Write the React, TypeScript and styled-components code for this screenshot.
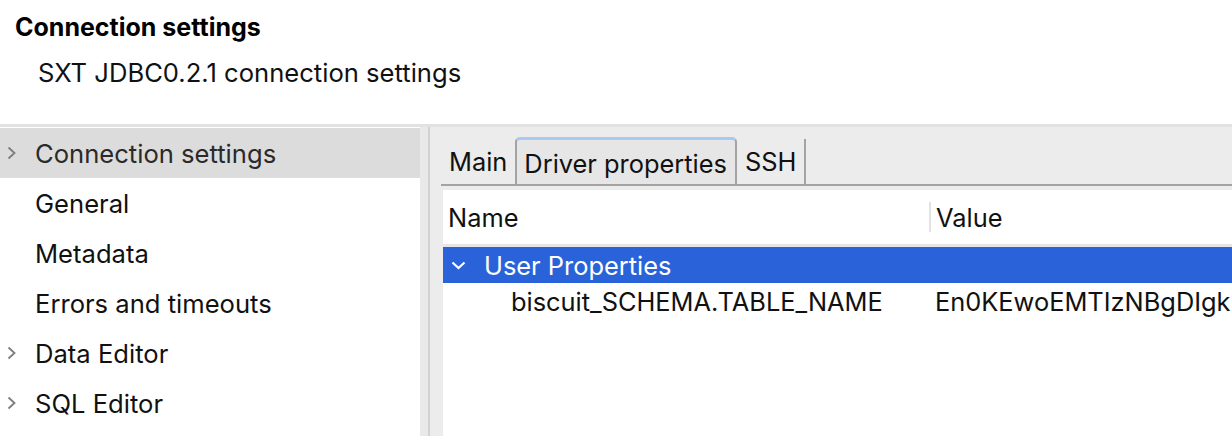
import * as React from 'react';
import styled, { createGlobalStyle } from 'styled-components';

const GlobalStyle = createGlobalStyle`
  html, body {
    margin: 0;
    padding: 0;
    background: #ffffff;
  }
  body {
    width: 1232px;
    height: 436px;
    overflow: hidden;
    font-family: Inter, "Liberation Sans", Arial, sans-serif;
    color: #1a1a1a;
  }
`;

const Page = styled.div`
  display: flex;
  flex-direction: column;
  width: 1232px;
  height: 436px;
`;

const Header = styled.header`
  height: 127px;
  box-sizing: border-box;
  padding: 12px 0 0 15px;
  background: #ffffff;
  border-bottom: 3px solid #e2e2e2;
`;

const Title = styled.h1`
  margin: 0;
  font-size: 25px;
  font-weight: 700;
  line-height: 30px;
  color: #000;
`;

const Subtitle = styled.div`
  margin: 16px 0 0 23px;
  font-size: 25.6px;
  line-height: 30px;
  color: #111;
`;

const Body = styled.div`
  flex: 1;
  display: flex;
  min-height: 0;
`;

const Sidebar = styled.nav`
  width: 420px;
  padding-top: 1px;
  background: #ffffff;
`;

const NavRow = styled.div<{ $selected?: boolean }>`
  display: flex;
  align-items: center;
  height: 50px;
  padding-left: 7px;
  background: ${({ $selected }) => ($selected ? '#dcdcdc' : 'transparent')};
  font-size: 25.6px;
  color: ${({ $selected }) => ($selected ? '#2a2a2a' : '#111')};
`;

const ChevronSlot = styled.span`
  width: 28px;
  display: flex;
  align-items: center;
`;

const Splitter = styled.div`
  width: 8px;
  background: #e9e9e9;
  border-right: 2px solid #d2d2d2;
`;

const Panel = styled.section`
  flex: 1;
  display: flex;
  flex-direction: column;
  padding: 10px 0 0 11px;
  background: #ececec;
  min-width: 0;
`;

const TabBar = styled.div`
  display: flex;
  align-items: flex-end;
  height: 47px;
  border-bottom: 2px solid #a3a3a3;
`;

const Tab = styled.div<{ $active?: boolean; $edge?: boolean }>`
  box-sizing: border-box;
  height: ${({ $active }) => ($active ? '47px' : '45px')};
  display: flex;
  align-items: center;
  padding: ${({ $active }) => ($active ? '3px 8px 0 7px' : '0 8px')};
  font-size: 25.4px;
  color: #111;
  background: ${({ $active }) => ($active ? '#e6e6e6' : 'transparent')};
  border-left: ${({ $active }) => ($active ? '2px solid #a3a3a3' : 'none')};
  border-right: ${({ $active, $edge }) =>
    $active || $edge ? '2px solid #a3a3a3' : 'none'};
  border-top: ${({ $active }) => ($active ? '3px solid #a9c8f2' : 'none')};
  border-radius: ${({ $active }) => ($active ? '5px 5px 0 0' : '0')};
`;

const TableArea = styled.div`
  flex: 1;
  margin: 4px 0 0 2px;
  background: #ffffff;
  overflow: hidden;
`;

const HeadRow = styled.div`
  display: grid;
  grid-template-columns: 486px 1fr;
  height: 54px;
  border-bottom: 3px solid #e6e6e6;
  align-items: center;
  font-size: 25.4px;
  color: #111;
`;

const HeadCell = styled.div<{ $divider?: boolean }>`
  display: flex;
  align-items: center;
  height: 30px;
  padding-left: 5px;
  border-left: ${({ $divider }) => ($divider ? '2px solid #e2e2e2' : 'none')};
  white-space: nowrap;
`;

const GroupRow = styled.div`
  display: flex;
  align-items: center;
  height: 36px;
  padding-left: 8px;
  background: #2a63d9;
  color: #ffffff;
  font-size: 25.4px;
`;

const GroupChevron = styled.span`
  width: 33px;
  display: flex;
  align-items: center;
`;

const DataRow = styled.div`
  display: grid;
  grid-template-columns: 486px 1fr;
  height: 36px;
  align-items: center;
  font-size: 25.4px;
  color: #111;
  white-space: nowrap;
`;

const NameCell = styled.div<{ $depth: number }>`
  padding-left: ${({ $depth }) => 67 * $depth + 1}px;
  overflow: hidden;
`;

const ValueCell = styled.div`
  padding-left: 6px;
  overflow: hidden;
`;

const RightChevron = () => (
  <svg width="10" height="14" viewBox="0 0 10 14">
    <polyline points="1.5,1.5 7.5,7 1.5,12.5" fill="none" stroke="#7d7d7d" strokeWidth="1.8" />
  </svg>
);

const DownChevron = () => (
  <svg width="15" height="9" viewBox="0 0 15 9">
    <polyline points="1.5,1.5 7.5,7 13.5,1.5" fill="none" stroke="#ffffff" strokeWidth="2.2" />
  </svg>
);

const navItems = [
  { label: 'Connection settings', expandable: true, selected: true },
  { label: 'General' },
  { label: 'Metadata' },
  { label: 'Errors and timeouts' },
  { label: 'Data Editor', expandable: true },
  { label: 'SQL Editor', expandable: true },
];

export default function App() {
  return (
    <>
      <GlobalStyle />
      <Page>
        <Header>
          <Title>Connection settings</Title>
          <Subtitle>SXT JDBC0.2.1 connection settings</Subtitle>
        </Header>
        <Body>
          <Sidebar>
            {navItems.map((item) => (
              <NavRow key={item.label} $selected={item.selected}>
                <ChevronSlot>{item.expandable && <RightChevron />}</ChevronSlot>
                {item.label}
              </NavRow>
            ))}
          </Sidebar>
          <Splitter />
          <Panel>
            <TabBar>
              <Tab>Main</Tab>
              <Tab $active>Driver properties</Tab>
              <Tab $edge>SSH</Tab>
            </TabBar>
            <TableArea>
              <HeadRow>
                <HeadCell>Name</HeadCell>
                <HeadCell $divider>Value</HeadCell>
              </HeadRow>
              <GroupRow>
                <GroupChevron>
                  <DownChevron />
                </GroupChevron>
                User Properties
              </GroupRow>
              <DataRow>
                <NameCell $depth={1}>biscuit_SCHEMA.TABLE_NAME</NameCell>
                <ValueCell>En0KEwoEMTIzNBgDIgkIARIFaGVsbG8SBAgBEAE</ValueCell>
              </DataRow>
            </TableArea>
          </Panel>
        </Body>
      </Page>
    </>
  );
}
